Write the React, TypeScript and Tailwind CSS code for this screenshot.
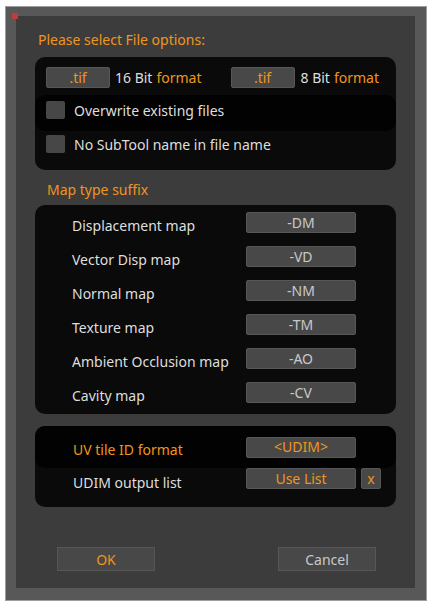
import React from "react";

const font = { fontFamily: '"Noto Sans", "Open Sans", sans-serif' };

const SuffixButton = ({ label, orange = false, w = "w-[110px]" }: { label: string; orange?: boolean; w?: string }) => (
  <div
    className={`${w} h-[21px] shrink-0 bg-[#484848] border border-[#575757] rounded-[2px] flex items-center justify-center text-[14px] leading-none ${
      orange ? "text-[#f0951c]" : "text-[#c8c8c8]"
    }`}
  >
    {label}
  </div>
);

const Checkbox = () => <div className="w-[19px] h-[18px] bg-[#474747] rounded-[2px] shrink-0" />;

const maps = [
  { name: "Displacement map", suffix: "-DM" },
  { name: "Vector Disp map", suffix: "-VD" },
  { name: "Normal map", suffix: "-NM" },
  { name: "Texture map", suffix: "-TM" },
  { name: "Ambient Occlusion map", suffix: "-AO" },
  { name: "Cavity map", suffix: "-CV" },
];

export default function App() {
  return (
    <div className="w-[433px] h-[608px] bg-white pt-[6px] pl-[5px]" style={font}>
      <div className="w-[422px] h-[595px] border border-[#9d9d9d] bg-[#585858] pt-[9px] pl-[10px] pr-[11px] pb-[12px] relative">
        {/* little red marker in the corner */}
        <div className="absolute left-[6px] top-[6px] w-[6px] h-[6px] bg-[#c23a3c]" />

        <div className="w-full h-full bg-[#3c3c3c] flex flex-col pt-[14px] px-[19px]">
          <div className="pl-[3px] h-[20px] leading-[20px] text-[14px] text-[#f0951c]">Please select File options:</div>

          {/* File options */}
          <div className="mt-[7px] h-[113px] bg-[#0a0a0a] rounded-[10px] flex flex-col pt-[10px]">
            <div className="flex items-center h-[21px] pl-[11px] text-[14px] text-[#dedede]">
              <SuffixButton label=".tif" orange w="w-[64px]" />
              <span className="ml-[5px]">16 Bit</span>
              <span className="ml-[4px] text-[#f0951c]">format</span>
              <div className="ml-[29px]">
                <SuffixButton label=".tif" orange w="w-[64px]" />
              </div>
              <span className="ml-[6px]">8 Bit</span>
              <span className="ml-[4px] text-[#f0951c]">format</span>
            </div>
            <div className="mt-[7px] h-[36px] bg-[#020202] rounded-[10px] flex items-start pt-[6px] pl-[11px] text-[14px] leading-[20px] text-[#dedede]">
              <Checkbox />
              <span className="ml-[9px]">Overwrite existing files</span>
            </div>
            <div className="h-[34px] flex items-start pt-[4px] pl-[11px] text-[14px] leading-[20px] text-[#dedede]">
              <Checkbox />
              <span className="ml-[9px]">No SubTool name in file name</span>
            </div>
          </div>

          <div className="mt-[10px] pl-[12px] h-[20px] leading-[20px] text-[14px] text-[#f0951c]">Map type suffix</div>

          {/* Map type suffix */}
          <div className="mt-[5px] h-[209px] bg-[#0a0a0a] rounded-[10px] pt-[7px] flex flex-col gap-[13px]">
            {maps.map((m) => (
              <div key={m.suffix} className="flex items-start h-[21px]">
                <div className="w-[211px] pl-[37px] mt-[4px] leading-[20px] text-[14px] text-[#dedede]">{m.name}</div>
                <SuffixButton label={m.suffix} />
              </div>
            ))}
          </div>

          {/* UDIM */}
          <div className="mt-[12px] h-[81px] bg-[#0a0a0a] rounded-[10px] flex flex-col">
            <div className="h-[42px] bg-[#020202] rounded-[10px] flex items-center">
              <div className="w-[211px] pl-[38px] text-[14px] text-[#f0951c] mt-[4px]">UV tile ID format</div>
              <SuffixButton label="<UDIM>" orange />
            </div>
            <div className="flex items-start h-[21px]">
              <div className="w-[211px] pl-[38px] mt-[5px] leading-[20px] text-[14px] text-[#dedede]">UDIM output list</div>
              <SuffixButton label="Use List" orange />
              <div className="ml-[5px]">
                <SuffixButton label="x" orange w="w-[20px]" />
              </div>
            </div>
          </div>

          {/* Actions */}
          <div className="mt-[40px] flex justify-between pl-[22px] pr-[20px]">
            <div className="w-[98px] h-[24px] bg-[#484848] border border-[#575757] flex items-center justify-center text-[14px] text-[#f0951c]">
              OK
            </div>
            <div className="w-[98px] h-[24px] bg-[#484848] border border-[#575757] flex items-center justify-center text-[14px] text-[#c8c8c8]">
              Cancel
            </div>
          </div>
        </div>
      </div>
    </div>
  );
}
